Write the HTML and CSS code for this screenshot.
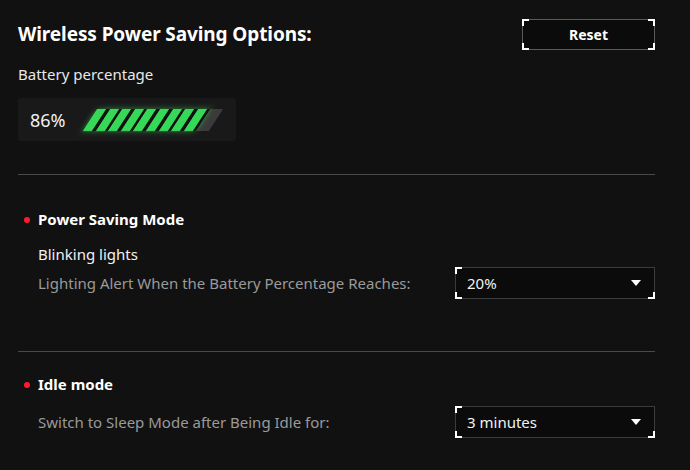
FILE: index.html
```html
<!DOCTYPE html>
<html>
<head>
<meta charset="utf-8">
<link rel="stylesheet" href="styles.css">
</head>
<body>
<div class="page">
  <div class="header">
    <h1 class="title">Wireless Power Saving Options:</h1>
    <button class="btn corners4">
      <span class="c tl"></span><span class="c tr"></span><span class="c bl"></span><span class="c br"></span>
      Reset
    </button>
  </div>
  <div class="label">Battery percentage</div>
  <div class="battery">
    <span class="pct">86%</span>
    <div class="bar">
      <div class="fill" style="width:90%"></div>
    </div>
  </div>
  <div class="divider first"></div>

  <div class="section s1">
    <div class="sec-title"><span class="dot"></span>Power Saving Mode</div>
    <div class="sub">Blinking lights</div>
    <div class="row">
      <span class="desc">Lighting Alert When the Battery Percentage Reaches:</span>
      <div class="select">
        <span class="c tl"></span><span class="c bl"></span><span class="c br"></span>
        <span class="val">20%</span>
        <span class="arrow"></span>
      </div>
    </div>
  </div>
  <div class="divider second"></div>

  <div class="section s2">
    <div class="sec-title"><span class="dot"></span>Idle mode</div>
    <div class="row r2">
      <span class="desc">Switch to Sleep Mode after Being Idle for:</span>
      <div class="select">
        <span class="c tl"></span><span class="c bl"></span><span class="c br"></span>
        <span class="val">3 minutes</span>
        <span class="arrow"></span>
      </div>
    </div>
  </div>
</div>
</body>
</html>
```
FILE: styles.css
```css
* { box-sizing: border-box; }
html, body { margin: 0; padding: 0; }
body {
  background: #111111;
  width: 690px;
  height: 470px;
  overflow: hidden;
  font-family: "Noto Sans", "Open Sans", sans-serif;
  color: #fff;
}
.page {
  padding: 18px 35px 0 18px;
}
.header {
  display: flex;
  justify-content: space-between;
  align-items: center;
  height: 31px;
}
.title {
  margin: 0;
  font-size: 19px;
  font-weight: 700;
  line-height: 24px;
  letter-spacing: -0.1px;
}
.btn {
  position: relative;
  width: 133px;
  height: 31px;
  background: #0b0b0b;
  border: 1px solid #5a5a5a;
  color: #fff;
  font-family: inherit;
  font-size: 14px;
  font-weight: 700;
  padding: 0;
  margin-top: 1px;
}
.c {
  position: absolute;
  width: 7px;
  height: 7px;
  border-color: #fff;
  border-style: solid;
  border-width: 0;
}
.tl { top: -1px; left: -1px; border-top-width: 2px; border-left-width: 2px; }
.tr { top: -1px; right: -1px; border-top-width: 2px; border-right-width: 2px; }
.bl { bottom: -1px; left: -1px; border-bottom-width: 2px; border-left-width: 2px; }
.br { bottom: -1px; right: -1px; border-bottom-width: 2px; border-right-width: 2px; }

.label {
  margin-top: 15px;
  font-size: 15px;
  line-height: 20px;
  color: #e8e8e8;
}
.battery {
  margin-top: 14px;
  width: 218px;
  height: 43px;
  background: #191919;
  border-radius: 3px;
  display: flex;
  align-items: center;
  padding-left: 12px;
}
.pct {
  font-size: 18px;
  color: #f2f2f2;
  width: 58px;
}
.bar {
  width: 126px;
  height: 22px;
  transform: skewX(-33deg);
  background: #3a3a3a;
  margin-left: 2px;
}
.fill {
  height: 100%;
  background: repeating-linear-gradient(90deg, #35d957 0 9px, #111 9px 12.6px);
  filter: drop-shadow(0 0 3px rgba(53, 217, 87, 0.55));
}

.divider {
  height: 1px;
  background: #4a4a4a;
}
.divider.first { margin-top: 33px; }
.divider.second { margin-top: 52px; }

.section { padding-left: 20px; }
.s1 .sec-title { margin-top: 34px; }
.s2 .sec-title { margin-top: 22px; }
.sec-title {
  position: relative;
  font-size: 15px;
  font-weight: 700;
  line-height: 20px;
}
.dot {
  position: absolute;
  left: -14px;
  top: 8px;
  width: 6px;
  height: 6px;
  border-radius: 50%;
  background: #ff1a2e;
}
.sub {
  margin-top: 15px;
  font-size: 15px;
  line-height: 20px;
  color: #f2f2f2;
}
.row {
  margin-top: 3px;
  display: flex;
  justify-content: space-between;
  align-items: center;
}
.row.r2 { margin-top: 12px; }
.desc {
  font-size: 15px;
  color: #9a9a9a;
}
.select {
  position: relative;
  width: 200px;
  height: 32px;
  background: #0b0b0b;
  border: 1px solid #3c3c3c;
  display: flex;
  align-items: center;
  padding-left: 11px;
}
.val {
  font-size: 15px;
  color: #f2f2f2;
  flex: 1;
}
.arrow {
  width: 0;
  height: 0;
  border-left: 5px solid transparent;
  border-right: 5px solid transparent;
  border-top: 6px solid #fff;
  margin-right: 13px;
}
```
